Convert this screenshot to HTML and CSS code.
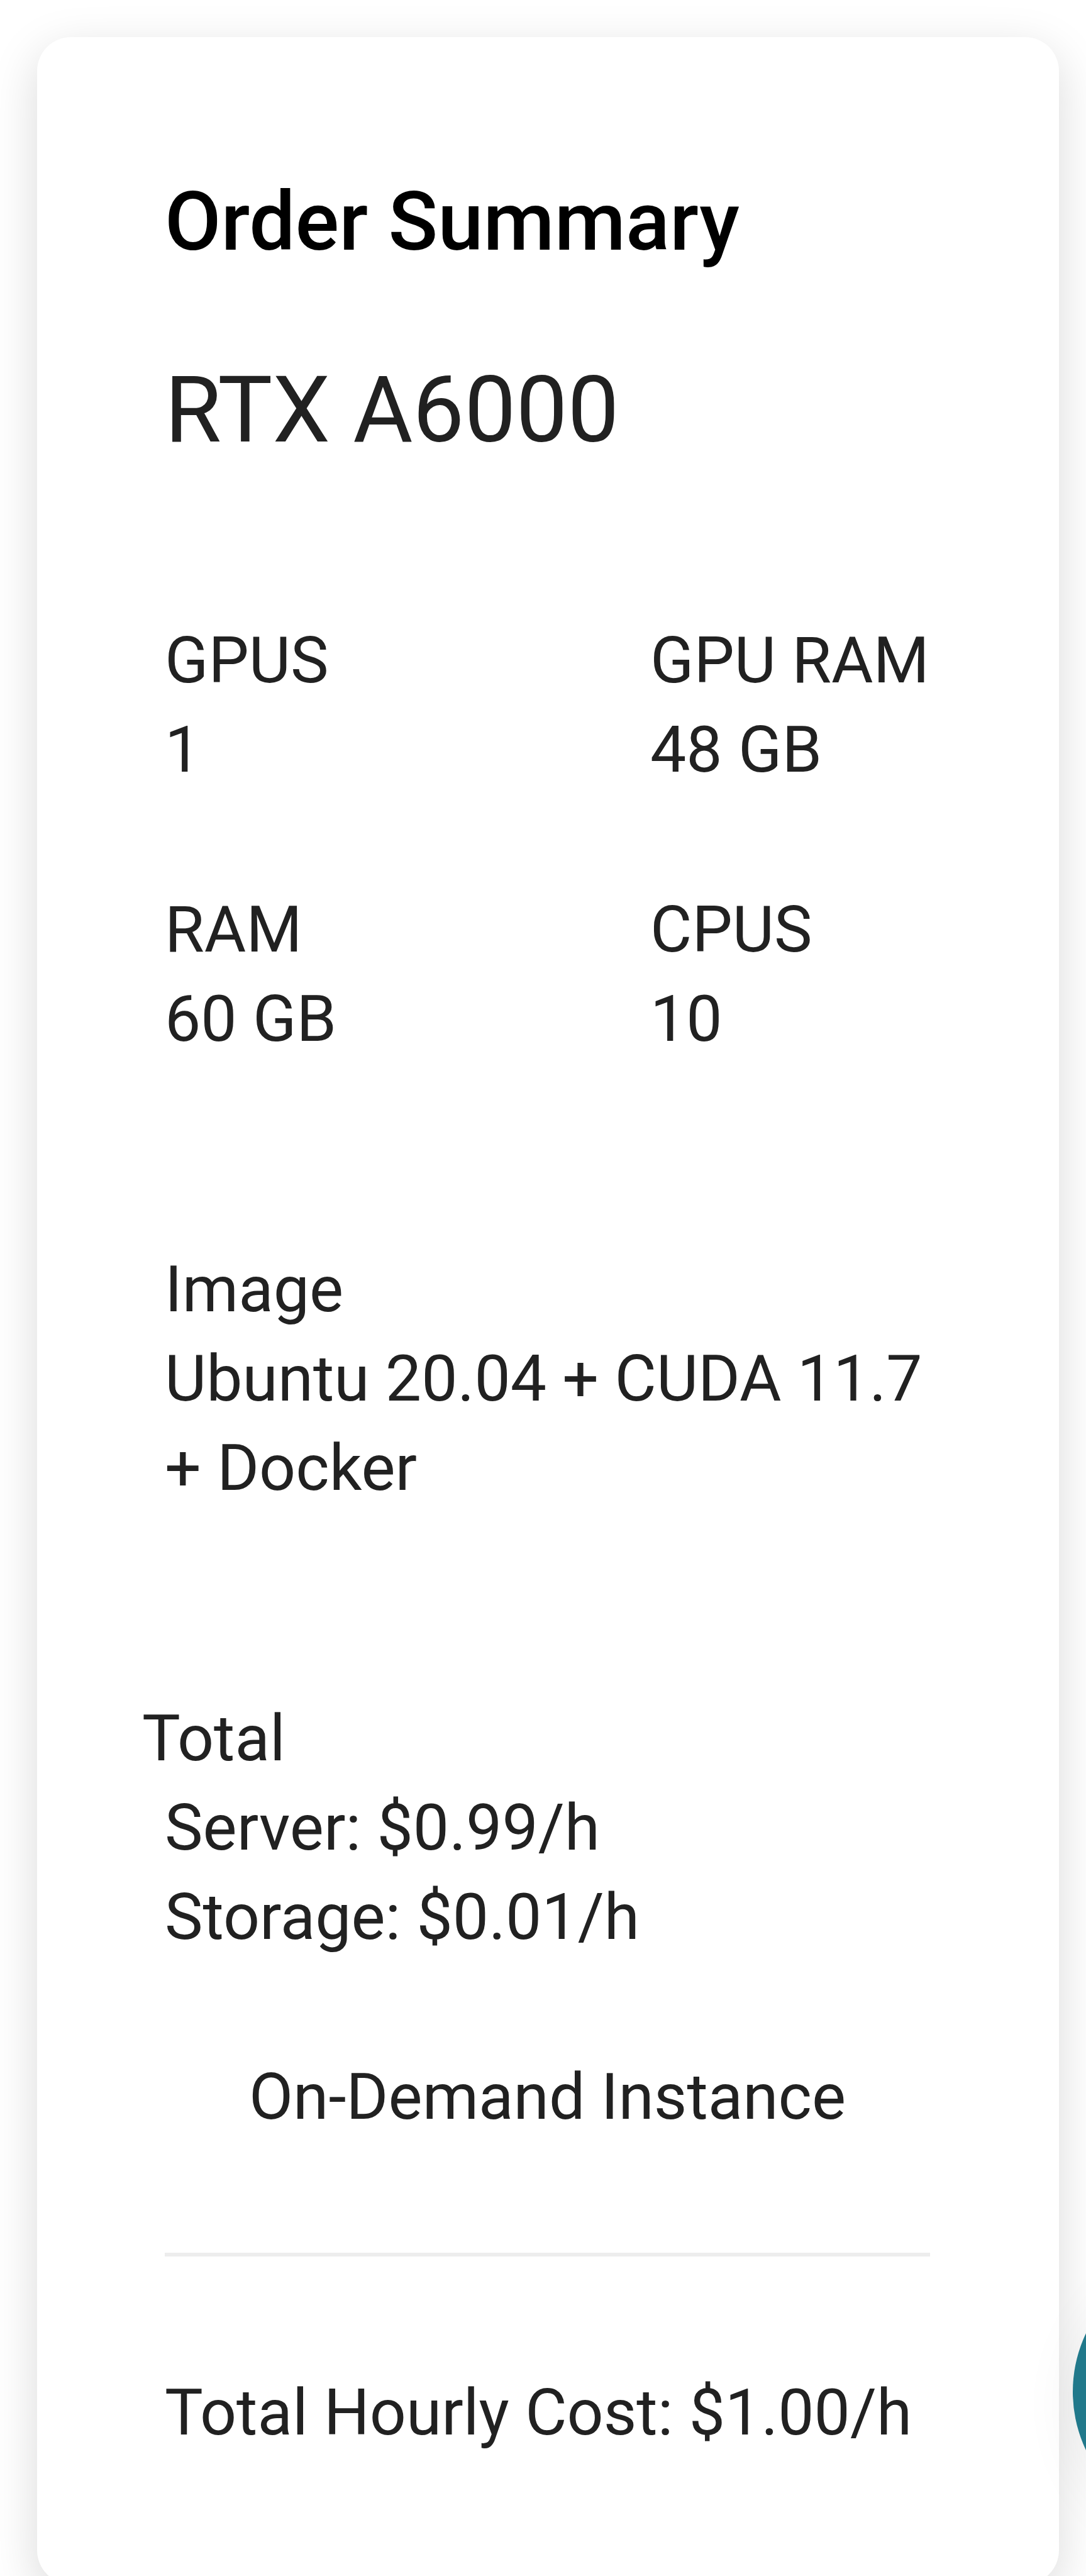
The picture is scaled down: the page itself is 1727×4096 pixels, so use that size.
FILE: index.html
```html
<!DOCTYPE html>
<html lang="en">
<head>
<meta charset="utf-8">
<title>Order Summary</title>
<link rel="stylesheet" href="styles.css">
</head>
<body>
<main class="page">
  <section class="card">
    <h1 class="title">Order Summary</h1>
    <h2 class="product">RTX A6000</h2>
    <dl class="specs">
      <div><dt>GPUS</dt><dd>1</dd></div>
      <div><dt>GPU RAM</dt><dd>48 GB</dd></div>
      <div><dt>RAM</dt><dd>60 GB</dd></div>
      <div><dt>CPUS</dt><dd>10</dd></div>
    </dl>
    <dl class="image">
      <dt>Image</dt>
      <dd>Ubuntu 20.04 + CUDA 11.7 + Docker</dd>
    </dl>
    <h3 class="total-label">Total</h3>
    <ul class="costs">
      <li>Server: $0.99/h</li>
      <li>Storage: $0.01/h</li>
    </ul>
    <p class="plan">On-Demand Instance</p>
    <hr class="rule">
    <p class="hourly">Total Hourly Cost: $1.00/h</p>
  </section>
  <button class="chat" type="button" aria-label="Open chat"></button>
</main>
</body>
</html>
```
FILE: styles.css
```css
* {
  box-sizing: border-box;
  margin: 0;
  padding: 0;
}

body {
  background: #fff;
  color: #212121;
  font-family: Roboto, "Liberation Sans", sans-serif;
  font-size: 102px;
  line-height: 142px;
}

.page {
  position: relative;
  height: 100vh;
  overflow: hidden;
  padding: 59px 43px 0 59px;
}

.card {
  padding: 204px 205px 202px 203px;
  background: #fff;
  border-radius: 54px;
  box-shadow: 0 22px 76px rgba(0, 0, 0, 0.15);
}

.title {
  color: #000;
  font-size: 130px;
  font-weight: 500;
  line-height: 180px;
}

.product {
  margin-top: 110px;
  font-size: 146px;
  font-weight: 400;
  line-height: 200px;
}

.specs {
  display: grid;
  grid-template-columns: 772px 1fr;
  row-gap: 144px;
  margin-top: 226px;
  white-space: nowrap;
}

.image {
  margin-top: 288px;
}

.total-label {
  margin: 288px 0 0 -36px;
  font-size: inherit;
  font-weight: 400;
}

.costs {
  list-style: none;
}

.plan {
  margin-top: 144px;
  text-align: center;
}

.rule {
  margin-top: 177px;
  border: 0;
  border-top: 6px solid #ededed;
}

.hourly {
  margin-top: 177px;
}

.chat {
  position: absolute;
  top: 3587px;
  right: -411px;
  width: 432px;
  height: 432px;
  border: 0;
  border-radius: 50%;
  background: #21798b;
  box-shadow: 0 20px 90px rgba(0, 0, 0, 0.06);
}
```
